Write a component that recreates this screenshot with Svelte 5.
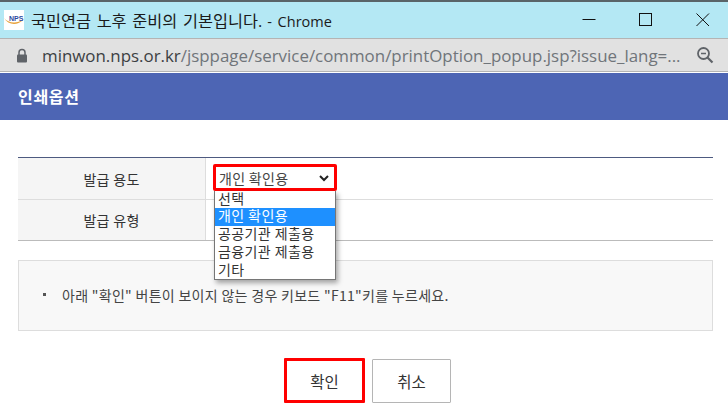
<script>
  const options = ['선택', '개인 확인용', '공공기관 제출용', '금융기관 제출용', '기타'];
</script>

<div class="page">
  <div class="titlebar">
    <div class="favicon">
      <svg width="20" height="20" viewBox="0 0 20 20">
        <path d="M0 8 C4 13 12 14 19 10 C13 16 4 15 0 8Z" fill="#e8a33c"/>
        <text class="nps" x="5" y="10.5">NPS</text>
      </svg>
    </div>
    <span class="title"><span class="ko">국민연금 노후 준비의 기본입니다.</span><span class="suffix">- Chrome</span></span>
    <div class="winbtns">
      <svg class="win" width="14" height="14" viewBox="0 0 14 14"><path d="M0.5 6.5H13.5" stroke="#111" fill="none"/></svg>
      <svg class="win" width="14" height="14" viewBox="0 0 14 14"><rect x="0.5" y="0.5" width="12" height="12" stroke="#111" fill="none"/></svg>
      <svg class="win" width="14" height="14" viewBox="0 0 14 14"><path d="M0.5 0.5L13 13M13 0.5L0.5 13" stroke="#111" fill="none"/></svg>
    </div>
  </div>
  <div class="addressbar">
    <svg class="lock" width="12" height="15" viewBox="0 0 12 15">
      <path d="M3 7V4.5a3 3 0 0 1 6 0V7" stroke="#5f6368" stroke-width="1.5" fill="none"/>
      <rect x="1" y="6.5" width="10" height="8" rx="1" fill="#5f6368"/>
    </svg>
    <span class="url"><span class="host">minwon.nps.or.kr</span>/jsppage/service/common/printOption_popup.jsp?issue_lang=...</span>
    <svg class="zoomicon" width="18" height="18" viewBox="0 0 18 18">
      <circle cx="7.5" cy="7.5" r="5.5" stroke="#5f6368" stroke-width="1.8" fill="none"/>
      <path d="M5 7.5H10" stroke="#5f6368" stroke-width="1.5"/>
      <path d="M11.5 11.5L16.5 16.5" stroke="#5f6368" stroke-width="2.2"/>
    </svg>
  </div>
  <header class="head">인쇄옵션</header>
  <main class="body">
    <div class="table">
      <div class="row">
        <div class="label">발급 용도</div>
        <div class="value">
          <div class="selectwrap">
            <div class="select">
              <span>개인 확인용</span>
              <svg width="10" height="7" viewBox="0 0 10 7"><path d="M1 1L5 5L9 1" stroke="#222" stroke-width="2" fill="none"/></svg>
            </div>
            <ul class="menu">
              {#each options as o, i}
                <li class:active={i === 1}>{o}</li>
              {/each}
            </ul>
          </div>
        </div>
      </div>
      <div class="row">
        <div class="label second">발급 유형</div>
        <div class="value"></div>
      </div>
    </div>
    <div class="notice">
      <span class="bullet"></span>
      <span>아래 "확인" 버튼이 보이지 않는 경우 키보드 "F11"키를 누르세요.</span>
    </div>
    <div class="actions">
      <button class="btn primary">확인</button>
      <button class="btn">취소</button>
    </div>
  </main>
</div>

<style>
  :global(body) {
    margin: 0;
    background: #fff;
  }
  .page {
    width: 728px;
    height: 418px;
    overflow: hidden;
    font-family: "Noto Sans CJK KR", "Liberation Sans", sans-serif;
    color: #333;
  }
  .titlebar {
    height: 36px;
    background: #b4e8f4;
    border-top: 2px solid #5a6468;
    display: flex;
    align-items: center;
    padding-left: 4px;
    color: #1a1a1a;
  }
  .favicon {
    width: 20px;
    height: 20px;
    background: #fff;
    flex: none;
  }
  .nps {
    font-family: "Liberation Sans", sans-serif;
    font-size: 7px;
    font-weight: 700;
    fill: #2b4aa0;
  }
  .title {
    margin-left: 7px;
    font-size: 14.5px;
    font-family: "Open Sans", "Noto Sans CJK KR", sans-serif;
    white-space: nowrap;
  }
  .ko {
    font-size: 16.3px;
    word-spacing: 1.5px;
  }
  .suffix {
    margin-left: 5px;
    word-spacing: 2px;
  }
  .winbtns {
    margin-left: auto;
    display: flex;
    gap: 43px;
    padding-right: 18px;
  }
  .addressbar {
    height: 32px;
    background: #e1e1e1;
    border-top: 1px solid #b4b4b4;
    border-bottom: 1px solid #b4b4b4;
    display: flex;
    align-items: center;
    padding-left: 16px;
    padding-right: 14px;
  }
  .url {
    margin-left: 14px;
    font-family: "Open Sans", sans-serif;
    font-size: 16.9px;
    color: #70757a;
    white-space: nowrap;
  }
  .host {
    color: #3c4043;
  }
  .zoomicon {
    margin-left: auto;
  }
  .head {
    height: 47px;
    margin-top: 1px;
    background: #4d65b4;
    color: #fff;
    font-size: 16px;
    letter-spacing: 0.7px;
    font-weight: 700;
    display: flex;
    align-items: center;
    padding-left: 18px;
    padding-bottom: 2px;
    box-sizing: border-box;
  }
  .body {
    padding: 37px 15px 0 18px;
  }
  .table {
    border-top: 1px solid #4d5a80;
    border-bottom: 1px solid #bbb;
  }
  .row {
    display: flex;
    height: 41px;
    box-sizing: border-box;
  }
  .row + .row {
    border-top: 1px solid #ddd;
  }
  .label {
    width: 188px;
    background: #f5f5f5;
    border-right: 1px solid #ddd;
    display: flex;
    align-items: center;
    justify-content: center;
    font-size: 14px;
    letter-spacing: 0.3px;
    color: #333;
    box-sizing: border-box;
    padding-top: 1px;
  }
  .label.second {
    padding-top: 0;
  }
  .value {
    flex: 1;
    padding: 6px 0 0 7px;
  }
  .selectwrap {
    position: relative;
    width: 124px;
  }
  .select {
    height: 27px;
    box-sizing: border-box;
    border: 3px solid #f00;
    border-radius: 2px;
    display: flex;
    align-items: center;
    justify-content: space-between;
    padding: 1px 5px 0 3px;
    font-size: 14px;
    letter-spacing: 0.3px;
    color: #444;
    background: #fff;
  }
  .menu {
    position: absolute;
    z-index: 2;
    top: 27px;
    left: 1px;
    width: 122px;
    box-sizing: border-box;
    margin: 0;
    padding: 0;
    list-style: none;
    background: #fff;
    border: 1px solid #767676;
    border-top: none;
    box-shadow: 2px 3px 5px rgba(0, 0, 0, 0.35);
    font-size: 14px;
    letter-spacing: 0.4px;
    color: #333;
  }
  .menu li {
    height: 18px;
    line-height: 15px;
    padding-left: 3px;
    white-space: nowrap;
  }
  .menu li:first-child {
    height: 17px;
    line-height: 14px;
  }
  .menu li:last-child {
    height: 17px;
  }
  .menu li.active {
    background: #1e90ff;
    color: #fff;
  }
  .notice {
    margin-top: 19px;
    height: 71px;
    box-sizing: border-box;
    background: #f8f8f8;
    border: 1px solid #ddd;
    display: flex;
    align-items: flex-start;
    padding: 25px 0 0 24px;
    font-size: 14px;
    letter-spacing: 0.3px;
    color: #444;
    line-height: 18px;
  }
  .bullet {
    width: 3px;
    height: 3px;
    background: #555;
    margin: 7px 16px 0 0;
    flex: none;
  }
  .actions {
    margin-top: 27px;
    display: flex;
    justify-content: center;
    align-items: flex-end;
    gap: 7px;
    padding-left: 4px;
  }
  .btn {
    width: 79px;
    height: 44px;
    box-sizing: border-box;
    background: #fff;
    border: 1px solid #b5b5b5;
    border-radius: 1px;
    font: inherit;
    font-size: 15.5px;
    color: #333;
    padding: 0;
  }
  .btn.primary {
    width: 81px;
    height: 45px;
    border: 3px solid #f00;
  }
</style>
